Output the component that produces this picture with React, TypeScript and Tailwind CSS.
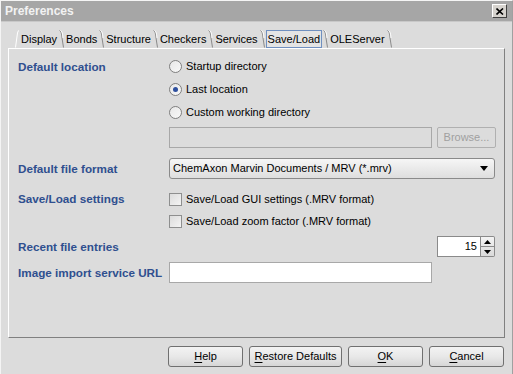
import React from "react";

const font = { fontFamily: '"Liberation Sans", Arial, sans-serif' };

const tabs = ["Display", "Bonds", "Structure", "Checkers", "Services", "Save/Load", "OLEServer"];

function Slant() {
  return (
    <svg width="5" height="18" viewBox="0 0 5 18" className="shrink-0">
      <path d="M0.5 0.5 Q2.5 1 3 8 L4.5 17.5" stroke="#8a8a8a" fill="none" strokeWidth="1" />
      <path d="M1.5 0.5 Q3.5 1 4 8" stroke="#ffffff" fill="none" strokeWidth="1" />
    </svg>
  );
}

function Radio({ checked }: { checked?: boolean }) {
  return (
    <span className="w-[13px] h-[13px] rounded-full border border-[#7f7f7f] bg-gradient-to-br from-[#e8e8e8] to-[#f8f8f8] flex items-center justify-center shrink-0">
      {checked && <span className="w-[5px] h-[5px] rounded-full bg-[#2d4f9e]" />}
    </span>
  );
}

function Check() {
  return (
    <span className="w-[13px] h-[13px] border border-[#8e8f8f] bg-gradient-to-br from-[#dcdcdc] to-[#f4f4f4] shrink-0" />
  );
}

function Btn({ u, rest, w }: { u: string; rest: string; w: string }) {
  return (
    <button className={`${w} h-[21px] rounded-[3px] border border-[#707070] bg-gradient-to-b from-[#f3f3f3] via-[#e8e8e8] to-[#d6d6d6] text-[11px] text-black flex items-center justify-center`}>
      <span className="underline underline-offset-2">{u}</span>
      {rest}
    </button>
  );
}

const label = "w-[151px] shrink-0 font-bold text-[11.7px] text-[#2f4f8f]";

export default function App() {
  return (
    <div style={font} className="w-[513px] h-[374px] bg-[#dcdcdc] border-l border-t border-[#f4f4f4] border-r border-r-[#a0a0a0] flex flex-col text-[11px] text-black overflow-hidden">
      <div className="h-[21px] shrink-0 bg-[#a6a6a6] border-b border-[#c8c8c8] flex items-center justify-between pl-[4px] pr-[5px]">
        <span className="font-bold text-[12px] text-[#f2f2f2]">Preferences</span>
        <span className="w-[15px] h-[14px] bg-[#d6d3ce] border border-t-white border-l-white border-r-[#404040] border-b-[#404040] flex items-center justify-center">
          <svg width="8" height="7" viewBox="0 0 8 7">
            <path d="M0.5 0.5 L7 6.5 M7 0.5 L0.5 6.5" stroke="#000" strokeWidth="1.6" />
          </svg>
        </span>
      </div>

      <div className="flex flex-col px-[7px] pt-[8px]">
        <div className="flex items-end h-[18px] pl-[7px]">
          <svg width="4" height="18" viewBox="0 0 4 18" className="shrink-0">
            <path d="M0.5 17.5 L2.5 3 Q3 0.5 4 0.5" stroke="#ffffff" fill="none" />
          </svg>
          {tabs.map((t) => (
            <div key={t} className="flex items-end h-[18px]">
              {t === "Save/Load" ? (
                <span className="h-[18px] px-[1px] ml-[1px] mr-[1px] border border-[#7090c0] bg-[#e4e4e4] flex items-center">{t}</span>
              ) : (
                <span className="h-[18px] px-[2px] flex items-center">{t}</span>
              )}
              <Slant />
            </div>
          ))}
        </div>

        <div className="h-[290px] border-t border-l border-white border-r border-b border-r-[#808080] border-b-[#808080] pl-[9px] pr-[9px] pt-[6px] flex flex-col">
          <div className="flex">
            <div className={`${label} h-[23px] flex items-center`}>Default location</div>
            <div className="flex-1 flex flex-col">
              {[
                ["Startup directory", false],
                ["Last location", true],
                ["Custom working directory", false],
              ].map(([t, c]) => (
                <div key={t as string} className="h-[23px] flex items-center gap-[4px]">
                  <Radio checked={c as boolean} />
                  <span>{t as string}</span>
                </div>
              ))}
              <div className="flex gap-[5px] mt-[3px]">
                <div className="w-[263px] h-[21px] border border-[#a8a8a8] bg-[#dcdcdc]" />
                <div className="w-[59px] h-[21px] border border-[#b0b0b0] rounded-[2px] text-[#a0a0a0] flex items-center justify-center">Browse...</div>
              </div>
            </div>
          </div>

          <div className="flex items-center mt-[10px]">
            <div className={label}>Default file format</div>
            <div className="w-[327px] h-[21px] rounded-[3px] border border-[#8a8a8a] bg-gradient-to-b from-[#f6f6f6] to-[#dedede] flex items-center justify-between pl-[3px] pr-[6px]">
              <span>ChemAxon Marvin Documents / MRV (*.mrv)</span>
              <svg width="8" height="5" viewBox="0 0 8 5">
                <path d="M0 0 L8 0 L4 5 Z" fill="#000" />
              </svg>
            </div>
          </div>

          <div className="flex mt-[9px]">
            <div className={`${label} h-[22px] flex items-center`}>Save/Load settings</div>
            <div className="flex flex-col">
              <div className="h-[22px] flex items-center gap-[4px]">
                <Check />
                <span>Save/Load GUI settings (.MRV format)</span>
              </div>
              <div className="h-[22px] flex items-center gap-[4px]">
                <Check />
                <span>Save/Load zoom factor (.MRV format)</span>
              </div>
            </div>
          </div>

          <div className="flex items-center mt-[4px]">
            <div className={label}>Recent file entries</div>
            <div className="flex-1" />
            <div className="flex h-[21px]">
              <div className="w-[44px] h-[21px] bg-white border border-[#8a8a8a] flex items-center justify-end pr-[3px]">15</div>
              <div className="w-[14px] flex flex-col border border-l-0 border-[#8a8a8a] rounded-r-[2px] bg-gradient-to-b from-[#f4f4f4] to-[#dadada]">
                <div className="flex-1 flex items-center justify-center border-b border-[#8a8a8a]">
                  <svg width="7" height="4" viewBox="0 0 7 4"><path d="M0 4 L3.5 0 L7 4 Z" fill="#000" /></svg>
                </div>
                <div className="flex-1 flex items-center justify-center">
                  <svg width="7" height="4" viewBox="0 0 7 4"><path d="M0 0 L7 0 L3.5 4 Z" fill="#000" /></svg>
                </div>
              </div>
            </div>
          </div>

          <div className="flex items-center mt-[5px]">
            <div className={label}>Image import service URL</div>
            <div className="w-[263px] h-[21px] bg-white border border-[#a8a8a8]" />
          </div>
        </div>

        <div className="flex justify-end gap-[6px] mt-[8px] pr-[1px]">
          <Btn u="H" rest="elp" w="w-[75px]" />
          <Btn u="R" rest="estore Defaults" w="w-[93px]" />
          <Btn u="O" rest="K" w="w-[75px]" />
          <Btn u="C" rest="ancel" w="w-[75px]" />
        </div>
      </div>
    </div>
  );
}
